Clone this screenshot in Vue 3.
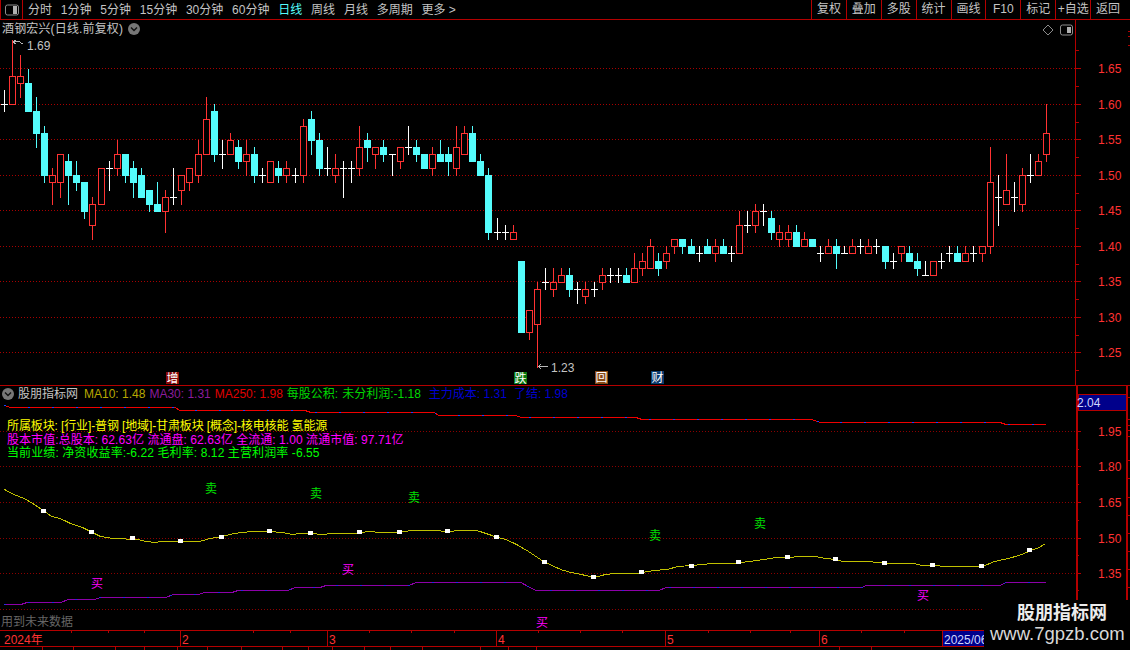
<script setup>
const periods = ['分时', '1分钟', '5分钟', '15分钟', '30分钟', '60分钟', '日线', '周线', '月线', '多周期']
const actions = ['复权', '叠加', '多股', '统计', '画线', 'F10', '标记', '+自选', '返回']

// 每根K线: 最高, 实体上沿, 实体下沿, 最低, 类型 (单位: 分)
const bars = [
  [162,160,160,159,'w'],[169,164,160,160,'r'],[167,164,163,161,'r'],[165,163,159,159,'c'],[161,159,156,154,'c'],
  [157,156,150,149,'c'],[151,150,149,146,'r'],[153,153,149,147,'r'],[153,152,150,146,'c'],[152,150,149,148,'c'],
  [149,149,145,144,'c'],[147,146,143,141,'r'],[151,151,146,146,'r'],[152,151,151,148,'w'],[155,153,151,150,'r'],
  [153,153,150,149,'c'],[152,151,149,147,'c'],[151,150,147,147,'c'],[148,148,146,145,'c'],[149,146,145,145,'c'],
  [148,147,145,142,'r'],[151,147,147,146,'w'],[150,150,148,146,'r'],[151,151,149,148,'r'],[155,153,150,149,'r'],
  [161,158,153,153,'r'],[160,159,153,152,'c'],[155,153,153,151,'w'],[156,155,153,153,'r'],[155,154,152,151,'c'],
  [155,153,152,150,'r'],[154,153,150,149,'c'],[151,150,150,149,'w'],[152,152,149,149,'r'],[152,151,150,149,'c'],
  [152,151,150,149,'r'],[151,150,150,149,'w'],[158,157,150,149,'r'],[159,158,155,153,'c'],[156,155,151,150,'c'],
  [154,151,151,150,'w'],[153,151,150,149,'r'],[152,151,151,147,'w'],[152,151,151,149,'w'],[157,154,151,150,'r'],
  [156,155,154,152,'c'],[154,154,153,151,'r'],[155,154,153,152,'c'],[153,153,153,150,'w'],[154,154,152,151,'r'],
  [157,154,154,153,'w'],[155,154,153,152,'c'],[153,153,151,151,'c'],[154,153,151,150,'r'],[155,153,152,152,'c'],
  [154,153,152,150,'c'],[157,154,151,150,'r'],[157,156,153,153,'r'],[157,156,152,152,'c'],[153,152,150,150,'c'],
  [151,150,142,141,'c'],[144,142,142,141,'w'],[143,142,142,141,'w'],[143,142,141,141,'r'],[138,138,128,128,'c'],
  [131,131,128,127,'r'],[135,134,129,123,'r'],[137,135,135,134,'w'],[137,135,134,133,'r'],[137,136,135,135,'r'],
  [137,136,134,133,'c'],[135,134,134,132,'w'],[135,134,133,132,'r'],[135,134,134,133,'w'],[137,136,135,134,'r'],
  [137,136,136,135,'w'],[137,136,136,135,'w'],[137,136,135,135,'c'],[139,137,135,135,'r'],[139,138,137,136,'r'],
  [141,140,137,137,'r'],[139,138,137,136,'c'],[140,139,138,137,'r'],[141,141,140,139,'r'],[141,141,140,139,'c'],
  [141,140,139,139,'c'],[140,139,139,138,'w'],[141,140,139,139,'c'],[141,140,139,138,'r'],[141,140,139,139,'c'],
  [140,139,139,138,'w'],[145,143,139,139,'r'],[145,143,143,142,'w'],[146,145,143,142,'r'],[146,145,145,143,'w'],
  [145,144,142,141,'c'],[143,142,141,140,'r'],[143,142,141,140,'r'],[143,142,140,140,'c'],[142,141,140,140,'r'],
  [141,141,140,140,'c'],[140,139,139,138,'w'],[141,140,139,139,'r'],[141,140,139,137,'c'],[140,139,139,139,'w'],
  [141,140,139,139,'r'],[141,140,140,139,'w'],[141,140,139,139,'r'],[141,140,140,139,'w'],[140,140,138,137,'c'],
  [139,138,138,137,'w'],[140,140,139,138,'r'],[140,139,138,138,'c'],[139,138,137,136,'c'],[138,136,136,136,'w'],
  [138,138,136,136,'r'],[139,138,138,137,'w'],[140,139,139,138,'w'],[140,139,138,138,'c'],[140,139,138,138,'r'],
  [140,139,139,138,'w'],[140,140,139,138,'r'],[154,149,140,139,'r'],[150,147,147,143,'w'],[153,148,146,146,'r'],
  [149,147,147,145,'w'],[151,150,146,145,'r'],[153,150,150,149,'w'],[153,152,150,150,'r'],[160,156,153,152,'r']
]

const jumps = [11, 23, 35, 47, 60, 72, 84, 96, 108, 120]
const colOf = (i) => 4 + 8 * i + jumps.filter((j) => i > j).length
const yOf = (p) => Math.round(104.3 + (160 - p) * 7.1)

const candles = bars.map(([h, t, b, l, kind], i) => ({
  kind,
  x: colOf(i),
  hi: yOf(h),
  top: yOf(t),
  bot: yOf(b),
  lo: yOf(l)
}))
const colours = { r: '#ff3232', c: '#54fcfc', w: '#ffffff' }

const upperGrid = [68, 104, 139, 175, 210, 246, 281, 317, 352]
const upperTicks = [
  { y: 68, t: '1.65' }, { y: 104, t: '1.60' }, { y: 139, t: '1.55' }, { y: 175, t: '1.50' },
  { y: 210, t: '1.45' }, { y: 246, t: '1.40' }, { y: 281, t: '1.35' }, { y: 317, t: '1.30' }, { y: 352, t: '1.25' }
]
const upperMinor = [50, 86, 122, 157, 193, 228, 264, 299, 335, 370]
const lowerGrid = [431, 466, 502, 538, 573, 609]
const lowerTicks = [
  { y: 431, t: '1.95' }, { y: 466, t: '1.80' }, { y: 502, t: '1.65' }, { y: 538, t: '1.50' }, { y: 573, t: '1.35' }
]
const lowerMinor = [449, 484, 520, 555, 590]
const gutter = [397, 419, 425, 430, 436, 460, 478, 497, 515, 533, 551, 569, 587, 600]

const snap = (y) => Math.floor(y) + 0.5
const z10 = [[13,58],[40,72],[70,84],[100,104],[130,123],[150,138],[175,146],[205,160],[240,173],[268,186],[292,199],[330,205],[400,207],[425,214],[450,217],[470,214],[520,213],[580,213],[610,205],[645,200],[680,191],[705,187],[730,184],[785,183],[820,187],[850,192],[870,190],[900,190],[940,192],[960,190],[1030,190],[1044,187],[1075,185],[1100,187],[1160,187],[1195,182],[1260,181],[1300,184],[1335,181],[1385,181],[1420,193],[1445,201],[1470,207],[1500,222],[1530,242],[1565,265]]
const z11 = [[15,486],[35,497],[60,509],[90,516],[120,523],[158,531],[190,523],[215,520],[285,520],[297,516],[330,512],[370,507],[400,500],[440,497],[470,494],[500,490],[565,490],[580,486],[610,483],[650,478],[685,472],[720,471],[755,469],[800,469],[830,475],[860,477],[880,484],[945,484],[990,488],[1003,489],[1085,491],[1110,495],[1142,495],[1180,499],[1285,498],[1320,485],[1360,474],[1400,463],[1425,450],[1450,442],[1468,430]]
const maPoints = [
  ...z10.map(([x, y]) => `${(x / 2.904).toFixed(1)},${snap(470 + y / 3)}`),
  ...z11.map(([x, y]) => `${(540 + x / 2.904).toFixed(1)},${snap(400 + y / 3)}`)
].join(' ')

const m10 = [[129,123],[268,186],[387,204],[527,213],[645,200],[785,183],[904,188],[1044,186],[1163,186],[1302,183],[1444,201]]
const m11 = [[15,486],[158,531],[297,516],[440,497],[579,486],[721,471],[860,477],[1003,489],[1142,495],[1285,498],[1424,450]]
const markers = [
  ...m10.map(([x, y]) => ({ x: Math.round(x / 2.904) - 3, y: Math.round(470 + y / 3) - 2 })),
  ...m11.map(([x, y]) => ({ x: Math.round(540 + x / 2.904) - 3, y: Math.round(400 + y / 3) - 2 }))
]

const toPoints = (pairs) => pairs.map(([x, y]) => `${x},${y + 0.5}`).join(' ')
const redLine = toPoints([[4,405],[11,407],[175,407],[180,410],[305,410],[311,412],[434,412],[439,415],[516,415],[521,417],[636,417],[642,419],[812,419],[820,422],[1000,422],[1006,424],[1046,424]])
const purpleLine = toPoints([[4,604],[21,604],[27,602],[61,602],[68,599],[95,599],[100,597],[166,597],[173,594],[199,594],[204,592],[232,592],[238,590],[288,590],[295,587],[320,587],[326,585],[409,585],[416,582],[521,582],[528,586],[536,590],[659,590],[666,587],[862,587],[866,585],[1000,585],[1006,582],[1046,582]])

const sells = [[211, 488], [316, 493], [414, 497], [655, 535], [760, 523]]
const buys = [[97, 583], [348, 569], [923, 595], [542, 622]]

const monthTicks = [
  { x: 180, t: '2' }, { x: 327, t: '3' }, { x: 496, t: '4' }, { x: 665, t: '5' }, { x: 819, t: '6' }
]
const smallTicks = [71, 108, 144, 253, 290, 369, 411, 454, 538, 580, 622, 708, 750, 790, 861, 904]
const tabLines = [42, 73, 115, 144, 177, 207, 241, 282, 308, 332, 364, 390, 422, 480, 508, 536, 839, 871]
</script>

<template>
  <div class="screen">
    <header class="toolbar">
      <div class="toggle">
        <svg width="16" height="12" viewBox="0 0 16 12">
          <rect x="1.5" y="1" width="13" height="10" rx="2" class="glyph-line" />
          <rect x="9" y="2" width="4" height="8" fill="#b0b0b0" />
        </svg>
      </div>
      <nav class="periods">
        <span v-for="p in periods" :key="p" :class="{ active: p === '日线' }">{{ p }}</span>
        <span>更多 &gt;</span>
      </nav>
      <div class="actions">
        <span v-for="a in actions" :key="a" class="action">{{ a }}</span>
      </div>
    </header>

    <section class="upper">
      <div class="plot">
        <svg class="layer" width="1075" height="365" viewBox="0 20 1075 365" shape-rendering="crispEdges">
          <line v-for="y in upperGrid" :key="y" x1="0" x2="1075" :y1="y + 0.5" :y2="y + 0.5" class="grid" />
          <g v-for="(c, i) in candles" :key="i">
            <rect :x="c.x" :y="c.hi" width="1" :height="c.lo - c.hi + 1" :fill="colours[c.kind]" />
            <rect v-if="c.kind === 'c'" :x="c.x - 3" :y="c.top" width="7" :height="c.bot - c.top + 1" fill="#54fcfc" />
            <rect v-else-if="c.kind === 'r'" :x="c.x - 2.5" :y="c.top + 0.5" width="6" :height="c.bot - c.top" fill="#000" stroke="#ff3232" />
            <rect v-else :x="c.x - 3" :y="c.top" width="7" height="1" fill="#fff" />
          </g>
          <path d="M13 42 L18 41 L23 44 M13 42 l3 -2 M13 42 l3 2" class="note-line" />
          <path d="M538 366.5 H548 M538 366.5 l3 -2 M538 366.5 l3 2" class="note-line" />
          <g shape-rendering="auto">
            <text x="27" y="50" class="note">1.69</text>
            <text x="551" y="372" class="note">1.23</text>
          </g>
          <rect x="166" y="372" width="13" height="12" fill="#8b0a0a" />
          <rect x="514" y="372" width="13" height="12" fill="#0a7a12" />
          <rect x="595" y="371" width="13" height="13" fill="#8a4a14" />
          <rect x="651" y="371" width="13" height="13" fill="#0a3a6e" />
          <g shape-rendering="auto" class="tags">
            <text x="172.5" y="382.5">增</text>
            <text x="520.5" y="382.5">跌</text>
            <text x="601.5" y="382">回</text>
            <text x="657.5" y="382">财</text>
          </g>
        </svg>
        <div class="title">
          <span class="title-text">酒钢宏兴(日线.前复权)</span>
          <svg width="12" height="12" viewBox="0 0 12 12">
            <circle cx="6" cy="6" r="6" fill="#777" />
            <path d="M3 4.5 L6 7.5 L9 4.5" fill="none" stroke="#111" stroke-width="1.4" />
          </svg>
        </div>
        <div class="corner">
          <svg width="12" height="12" viewBox="0 0 12 12">
            <path d="M6 1 L11 6 L6 11 L1 6 Z" class="glyph-line" />
          </svg>
          <svg width="13" height="12" viewBox="0 0 13 12">
            <rect x="0.5" y="1" width="12" height="10" rx="2" class="glyph-line" />
            <rect x="7" y="3" width="4" height="6" fill="#b0b0b0" />
          </svg>
        </div>
      </div>
      <svg class="axis" width="55" height="365" viewBox="1075 20 55 365" shape-rendering="crispEdges">
        <line x1="1075.5" x2="1075.5" y1="20" y2="385" class="rule" />
        <line v-for="t in upperTicks" :key="t.y" x1="1075" x2="1081" :y1="t.y + 0.5" :y2="t.y + 0.5" class="rule" />
        <line v-for="y in upperMinor" :key="y" x1="1075" x2="1079" :y1="y + 0.5" :y2="y + 0.5" class="rule" />
        <line v-for="y in [31, 36, 45]" :key="y" x1="1128" x2="1130" :y1="y + 0.5" :y2="y + 0.5" class="rule" />
        <g shape-rendering="auto">
          <text v-for="t in upperTicks" :key="t.y" x="1098" :y="t.y + 4.5" class="axis-text">{{ t.t }}</text>
        </g>
      </svg>
    </section>

    <section class="lower">
      <div class="plot">
        <svg class="layer" width="1076" height="244" viewBox="0 386 1076 244" shape-rendering="crispEdges">
          <line v-for="y in lowerGrid" :key="y" x1="0" x2="1076" :y1="y + 0.5" :y2="y + 0.5" class="grid dim" />
          <polyline :points="redLine" class="trace" stroke="#f00000" />
          <polyline :points="redLine" class="trace dash" stroke="#2040ff" />
          <polyline :points="purpleLine" class="trace" stroke="#8c00a8" />
          <polyline :points="purpleLine" class="trace dash" stroke="#2030e0" />
          <polyline :points="maPoints" class="trace" stroke="#c0c000" />
          <rect v-for="(m, i) in markers" :key="i" :x="m.x" :y="m.y" width="5" height="4" fill="#fff" />
          <g shape-rendering="auto">
            <text v-for="s in sells" :key="s[0]" :x="s[0]" :y="s[1] + 5" class="sign sell">卖</text>
            <text v-for="b in buys" :key="b[0]" :x="b[0]" :y="b[1] + 5" class="sign buy">买</text>
            <text x="1" y="626" class="future">用到未来数据</text>
          </g>
        </svg>
        <div class="legend">
          <svg width="12" height="12" viewBox="0 0 12 12">
            <circle cx="6" cy="6" r="6" fill="#777" />
            <path d="M3 4.5 L6 7.5 L9 4.5" fill="none" stroke="#111" stroke-width="1.4" />
          </svg>
          <span class="grey">股朋指标网</span>
          <span class="olive">MA10: 1.48</span>
          <span class="violet">MA30: 1.31</span>
          <span class="red">MA250: 1.98</span>
          <span class="lime">每股公积:</span>
          <span class="lime">未分利润:-1.18</span>
          <span class="navy">主力成本: 1.31</span>
          <span class="navy last">了结: 1.98</span>
        </div>
        <div class="facts">
          <p class="yellow">所属板块: [行业]-普钢 [地域]-甘肃板块 [概念]-核电核能 氢能源</p>
          <p class="pink">股本市值:总股本: 62.63亿 流通盘: 62.63亿 全流通: 1.00 流通市值: 97.71亿</p>
          <p class="green">当前业绩: 净资收益率:-6.22 毛利率: 8.12 主营利润率 -6.55</p>
        </div>
      </div>
      <svg class="axis" width="54" height="244" viewBox="1076 386 54 244" shape-rendering="crispEdges">
        <rect x="1076" y="386" width="2" height="244" fill="#b40000" />
        <rect x="1126" y="386" width="2" height="214" fill="#b40000" />
        <rect x="1078" y="394.5" width="48" height="16" fill="#00008b" stroke="#b40000" />
        <line v-for="t in lowerTicks" :key="t.y" x1="1077" x2="1081" :y1="t.y + 0.5" :y2="t.y + 0.5" class="rule" />
        <line v-for="y in lowerMinor" :key="y" x1="1077" x2="1079" :y1="y + 0.5" :y2="y + 0.5" class="rule" />
        <line v-for="y in gutter" :key="y" x1="1128" x2="1130" :y1="y + 0.5" :y2="y + 0.5" class="rule" />
        <g shape-rendering="auto">
          <text x="1077" y="407" class="box-text">2.04</text>
          <text v-for="t in lowerTicks" :key="t.y" x="1098" :y="t.y + 4.5" class="axis-text">{{ t.t }}</text>
        </g>
      </svg>
    </section>

    <footer class="time">
      <svg width="1130" height="17" viewBox="0 630 1130 17" shape-rendering="crispEdges">
        <line x1="0" x2="1076" y1="630.5" y2="630.5" class="rule" />
        <line x1="0" x2="1076" y1="646.5" y2="646.5" class="rule" />
        <line v-for="x in smallTicks" :key="x" :x1="x + 0.5" :x2="x + 0.5" y1="630" y2="633" class="rule" />
        <line v-for="m in monthTicks" :key="m.x" :x1="m.x + 0.5" :x2="m.x + 0.5" y1="630" y2="646" class="rule" />
        <rect x="942" y="631" width="134" height="15" fill="#00008b" />
        <line x1="942.5" x2="942.5" y1="630" y2="646" class="rule" />
        <g shape-rendering="auto">
          <text x="4" y="643.5" class="time-text">2024年</text>
          <text v-for="m in monthTicks" :key="m.x" :x="m.x + 2" y="643.5" class="time-text">{{ m.t }}</text>
          <text x="944" y="643.5" class="box-text">2025/06</text>
        </g>
      </svg>
    </footer>
    <svg class="tabs" width="1130" height="3" viewBox="0 0 1130 3" shape-rendering="crispEdges">
      <line v-for="x in tabLines" :key="x" :x1="x + 0.5" :x2="x + 0.5" y1="0" y2="3" class="rule" />
    </svg>

    <aside class="stamp">
      <strong>股朋指标网</strong>
      <span>www.7gpzb.com</span>
    </aside>
  </div>
</template>

<style>
html, body { margin: 0; background: #000; }
</style>

<style scoped>
.screen {
  position: relative;
  display: flex;
  flex-direction: column;
  width: 1130px;
  height: 650px;
  overflow: hidden;
  background: #000;
  color: #c4c4c4;
  font: 12px/14px "Liberation Sans", "Noto Sans CJK SC", sans-serif;
}
svg { display: block; }
.toolbar {
  display: flex;
  flex: none;
  align-items: center;
  height: 19px;
  border-bottom: 1px solid #b40000;
}
.toggle {
  display: flex;
  align-items: center;
  justify-content: center;
  box-sizing: border-box;
  width: 23px;
  height: 19px;
  border-left: 1px solid #b40000;
  border-right: 1px solid #b40000;
}
.periods {
  display: flex;
  gap: 8.8px;
  margin-left: 5px;
}
.active { color: #54fcfc; }
.actions {
  display: flex;
  margin-left: auto;
  padding-right: 5px;
}
.action {
  box-sizing: border-box;
  width: 34.9px;
  height: 19px;
  border-left: 1px solid #b40000;
  line-height: 19px;
  text-align: center;
}
.upper, .lower {
  display: flex;
  flex: none;
}
.upper {
  height: 365px;
  border-bottom: 1px solid #b40000;
}
.lower { height: 244px; }
.plot {
  position: relative;
  flex: none;
}
.title {
  position: absolute;
  top: 2px;
  left: 2px;
  display: flex;
  align-items: center;
  gap: 5px;
}
.title-text { letter-spacing: 0.15px; }
.corner {
  position: absolute;
  top: 4px;
  right: 2px;
  display: flex;
  align-items: center;
  gap: 6px;
}
.legend {
  position: absolute;
  top: 1px;
  left: 2px;
  display: flex;
  align-items: center;
  gap: 4px;
}
.legend span { white-space: nowrap; }
.grey { color: #c4c4c4; }
.olive { margin-left: 2px; color: #b8a800; }
.violet { color: #8c1c9c; }
.red { color: #e00000; }
.lime { color: #00d800; }
.navy { margin-left: 4px; color: #0000d0; }
.last { margin-left: 3px; }
.facts {
  position: absolute;
  top: 34px;
  left: 7px;
}
.facts p {
  margin: 0;
  line-height: 13.5px;
  white-space: nowrap;
}
.yellow { color: #ffff00; letter-spacing: -0.12px; }
.pink { color: #ff00ff; letter-spacing: 0.06px; }
.green { color: #00ff00; letter-spacing: 0.1px; }
.grid {
  stroke: #a80000;
  stroke-dasharray: 1 2;
}
.dim { stroke: #8c0000; }
.rule { stroke: #b40000; }
.glyph-line {
  fill: none;
  stroke: #8c8c8c;
}
.note-line {
  fill: none;
  stroke: #b8b8b8;
}
.note {
  fill: #c4c4c4;
  font-size: 12px;
}
.tags text {
  fill: #fff;
  font-size: 12px;
  text-anchor: middle;
}
.trace {
  fill: none;
  stroke-width: 1;
}
.dash { stroke-dasharray: 2 22; }
.sign {
  font-size: 12px;
  text-anchor: middle;
}
.sell { fill: #00e000; }
.buy { fill: #ff00ff; }
.future {
  fill: #666;
  font-size: 12px;
}
.axis-text {
  fill: #ff3232;
  font-size: 12px;
}
.box-text {
  fill: #d0d8ff;
  font-size: 12px;
}
.time { flex: none; height: 17px; }
.time-text {
  fill: #ff3232;
  font-size: 12px;
}
.tabs { flex: none; }
.stamp {
  position: absolute;
  right: 0;
  bottom: 0;
  display: flex;
  flex-direction: column;
  box-sizing: border-box;
  width: 146px;
  height: 50px;
  padding: 2px 0 0 6px;
  background: #000;
}
.stamp strong {
  margin-left: 27px;
  color: #ececec;
  font-size: 18px;
  font-weight: 700;
  line-height: 22px;
}
.stamp span {
  color: #d8d8d8;
  font-size: 18.5px;
  line-height: 20px;
  white-space: nowrap;
}
</style>
